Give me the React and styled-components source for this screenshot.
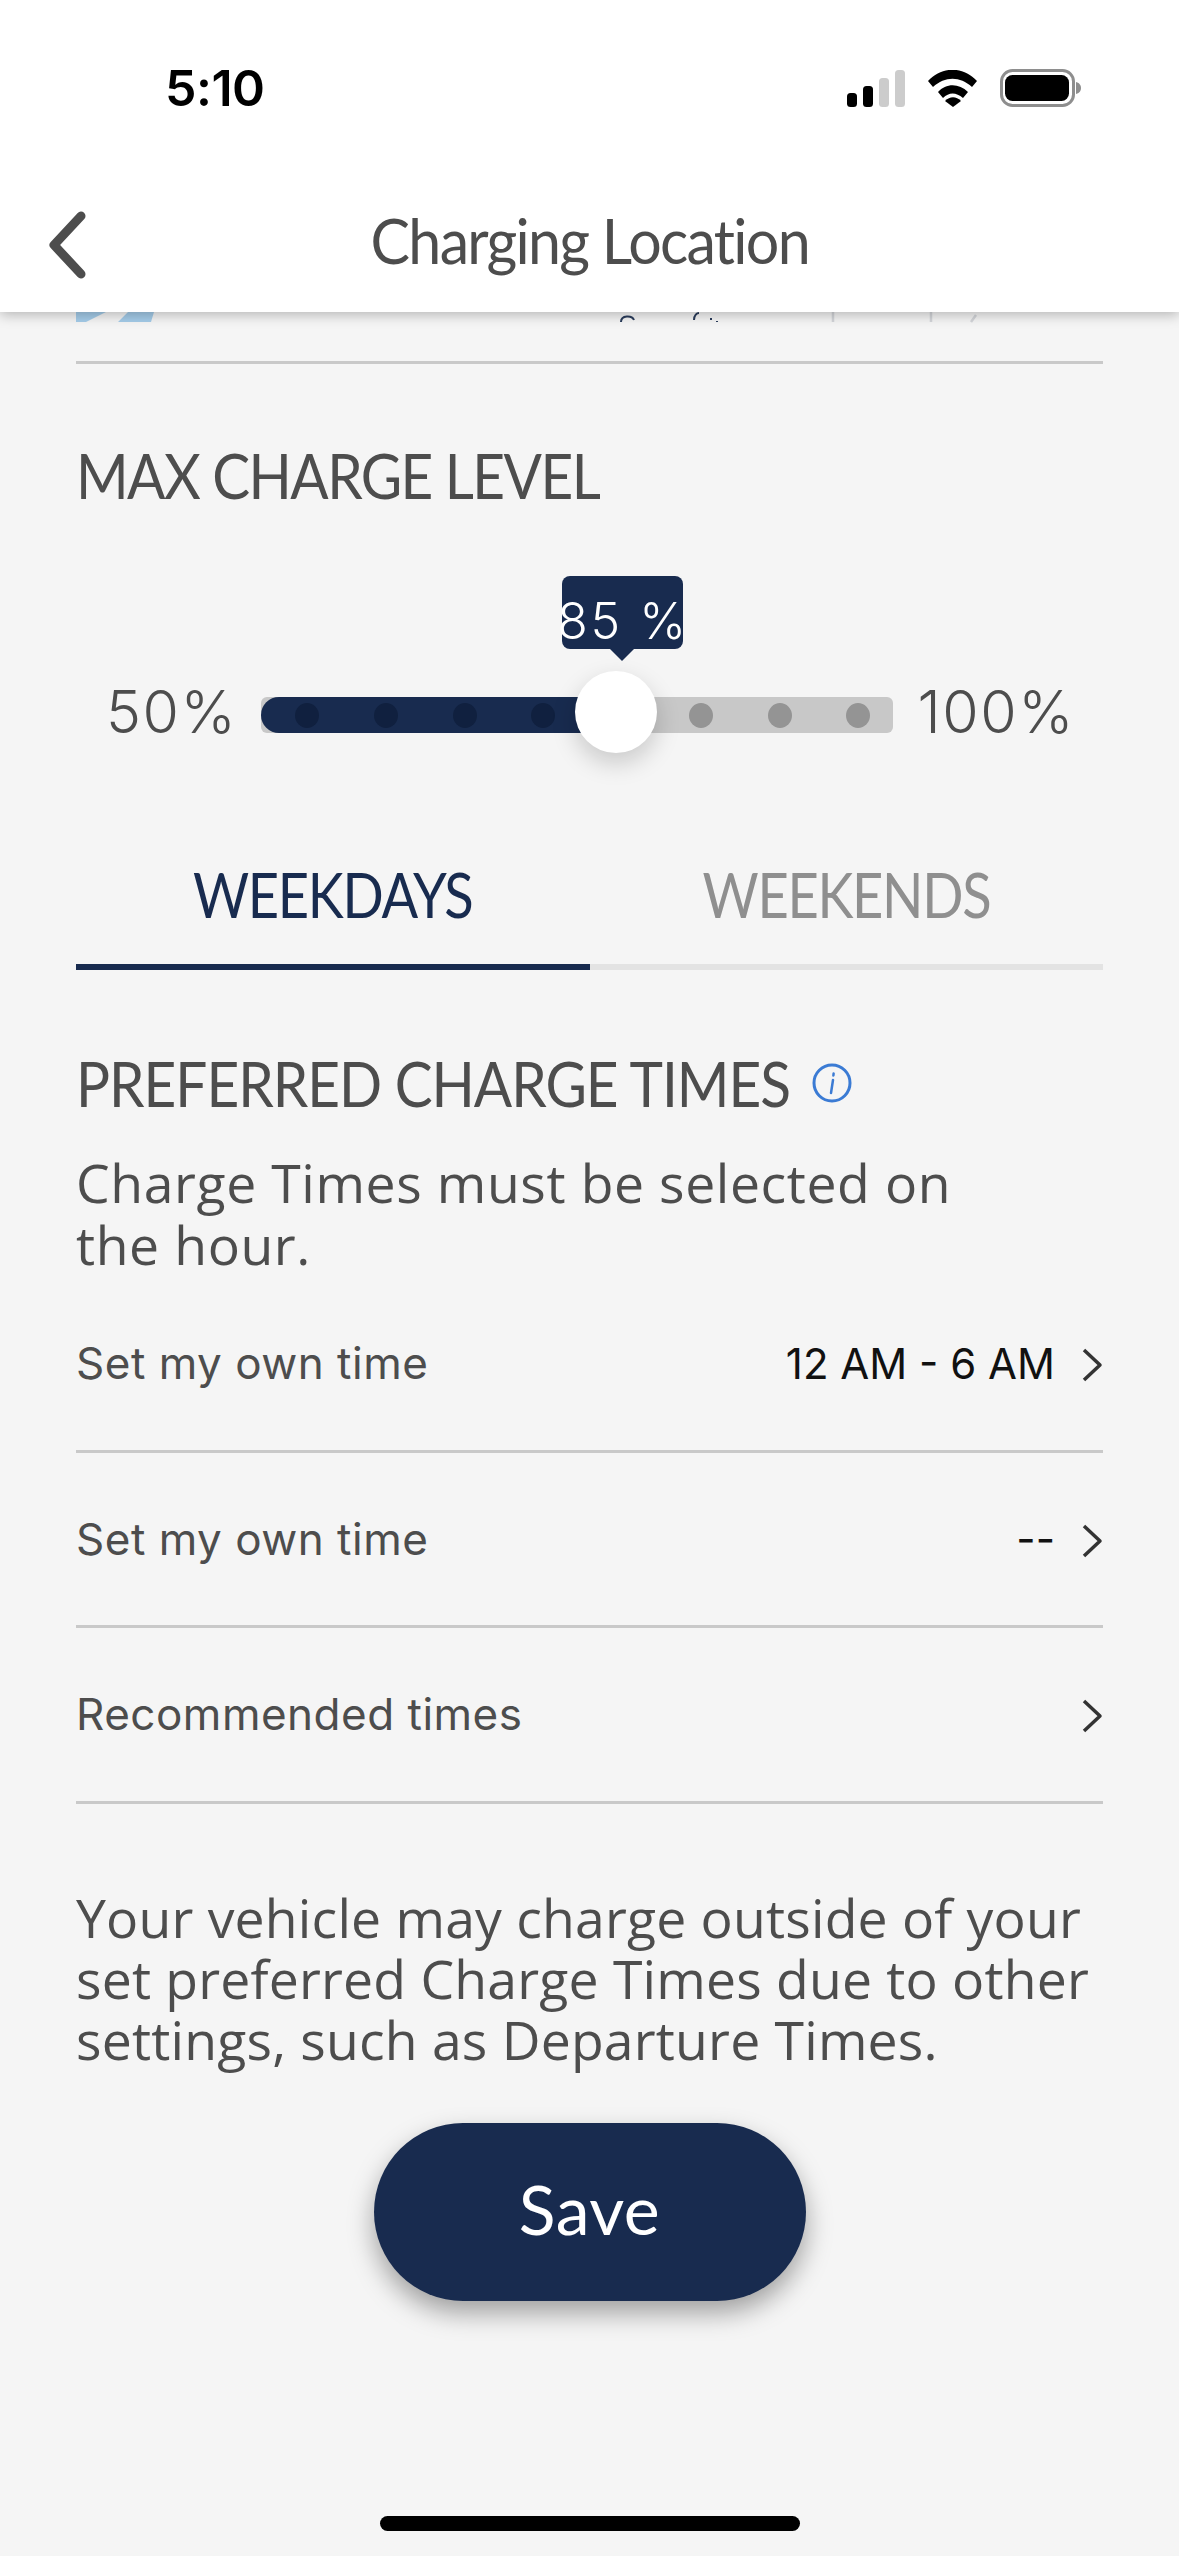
import React from "react";
import styled, { createGlobalStyle } from "styled-components";

const NAVY = "#182b4f";
const INK = "#4d4d4d";

const GlobalStyle = createGlobalStyle`
  html, body {
    margin: 0;
    padding: 0;
    background: #f5f5f5;
  }
  * {
    box-sizing: border-box;
  }
`;

const Page = styled.div`
  width: 1179px;
  height: 2556px;
  overflow: hidden;
  background: #f5f5f5;
  font-family: "Open Sans", "Liberation Sans", sans-serif;
  color: ${INK};
`;

const Header = styled.header`
  position: relative;
  z-index: 2;
  height: 312px;
  background: #fff;
  box-shadow: 0 3px 12px rgba(0, 0, 0, 0.26);
`;

const StatusBar = styled.div`
  height: 176px;
  padding: 0 98px 0 165px;
  display: flex;
  align-items: center;
  justify-content: space-between;
`;

const Clock = styled.span`
  font-family: Inter, "Liberation Sans", sans-serif;
  font-weight: 600;
  font-size: 50px;
  line-height: 60px;
  letter-spacing: -0.5px;
  color: #000;
`;

const StatusIcons = styled.div`
  display: flex;
  align-items: center;
  gap: 23px;
`;

const NavBar = styled.div`
  position: relative;
  height: 136px;
  padding-bottom: 8px;
  display: flex;
  align-items: center;
  justify-content: center;
`;

const BackButton = styled.svg`
  position: absolute;
  left: 44px;
  top: 34px;
`;

const Title = styled.h1`
  margin: 0;
  font-family: Lato, sans-serif;
  font-size: 62px;
  line-height: 80px;
  font-weight: 400;
  letter-spacing: -1.8px;
  transform: scaleX(0.954);
  color: ${INK};
`;

const Content = styled.main`
  padding: 0 76px;
`;

const MapPeek = styled.svg`
  display: block;
  margin: 0 -76px;
`;

const Rule = styled.div`
  height: 3px;
  background: #c9c9c9;
  margin-top: -1px;
`;

const Heading = styled.h2`
  margin: ${(p) => p.$top}px 0 0;
  font-family: Lato, sans-serif;
  font-size: 62px;
  line-height: 60px;
  font-weight: 400;
  letter-spacing: ${(p) => p.$ls}px;
  white-space: nowrap;
  transform: scaleX(0.915);
  transform-origin: left center;
  color: ${INK};
`;

const SliderRow = styled.div`
  margin-top: 160px;
  height: 100px;
  padding: 0 28px 0 30px;
  display: flex;
  align-items: center;
  justify-content: space-between;
`;

const RangeLabel = styled.span`
  margin-bottom: 6px;
  font-family: Inter, sans-serif;
  font-size: 59px;
  line-height: 60px;
  font-weight: 300;
  letter-spacing: 1.5px;
  color: ${INK};
`;

const Track = styled.div`
  position: relative;
  width: 632px;
  height: 36px;
  padding-left: 34px;
  display: flex;
  align-items: center;
  gap: 54.7px;
  background: #c8c8c8;
  border-radius: 6px;
`;

const Fill = styled.div`
  position: absolute;
  left: 0;
  top: 0;
  bottom: 0;
  background: ${NAVY};
  border-radius: 18px 0 0 18px;
`;

const Dot = styled.span`
  position: relative;
  width: 24px;
  height: 25px;
  flex: none;
  border-radius: 50%;
  background: ${(p) => (p.$on ? "#10203f" : "#949494")};
`;

const Thumb = styled.div`
  position: absolute;
  left: 314px;
  top: -26px;
  width: 82px;
  height: 82px;
  border-radius: 50%;
  background: #fff;
  box-shadow: 0 10px 24px rgba(0, 0, 0, 0.18);
`;

const Bubble = styled.div`
  position: absolute;
  left: 301px;
  top: -121px;
  width: 121px;
  height: 73px;
  border-radius: 8px;
  background: ${NAVY};
  display: flex;
  justify-content: center;
  color: #fff;
  font-family: Inter, sans-serif;
  font-size: 50px;
  font-weight: 300;
  letter-spacing: 2.5px;
  line-height: 90px;
  white-space: nowrap;

  &::after {
    content: "";
    position: absolute;
    left: 48px;
    bottom: -12px;
    border-left: 12px solid transparent;
    border-right: 12px solid transparent;
    border-top: 12px solid ${NAVY};
  }
`;

const Tabs = styled.div`
  margin-top: 99px;
  display: grid;
  grid-template-columns: 1fr 1fr;
`;

const Tab = styled.div`
  height: 106px;
  padding-bottom: 40px;
  text-align: center;
  border-bottom: 6px solid ${(p) => (p.$active ? NAVY : "#e3e3e3")};
`;

const TabLabel = styled.span`
  display: inline-block;
  font-family: Lato, sans-serif;
  font-size: 62px;
  line-height: 60px;
  letter-spacing: -1.5px;
  transform: scaleX(0.875);
  color: ${(p) => (p.$active ? NAVY : "#8f8f8f")};
`;

const HeadingRow = styled.div`
  display: flex;
  align-items: center;
`;

const InfoIcon = styled.svg`
  flex: none;
  margin: 83px 0 0 -44px;
`;

const Body = styled.p`
  margin: ${(p) => p.$top}px 0 0;
  font-size: 53.5px;
  letter-spacing: ${(p) => p.$ls}px;
  line-height: ${(p) => p.$lh}px;
  color: ${INK};
  white-space: pre-line;
`;

const RowList = styled.div`
  margin-top: 1px;
`;

const Row = styled.div`
  height: 175.5px;
  display: flex;
  align-items: center;
  justify-content: space-between;
  border-bottom: 3px solid #c9c9c9;
`;

const RowLabel = styled.span`
  font-family: Inter, sans-serif;
  font-size: 44px;
  letter-spacing: 0.5px;
  color: ${INK};
`;

const RowValue = styled.span`
  display: flex;
  align-items: center;
  gap: 26px;
  font-family: Inter, sans-serif;
  font-size: 42px;
  color: #111;
`;

const ChevronIcon = styled.svg`
  margin-top: 4px;
`;

const SaveButton = styled.button`
  display: block;
  width: 432px;
  height: 178px;
  margin: 53px auto 0;
  padding: 0 0 6px;
  border: 0;
  border-radius: 89px;
  background: ${NAVY};
  color: #fff;
  font-family: Lato, sans-serif;
  font-size: 68px;
  letter-spacing: 0.5px;
  box-shadow: 0 12px 26px rgba(0, 0, 0, 0.35);
`;

const HomeBar = styled.div`
  width: 420px;
  height: 15px;
  margin: 215px auto 0;
  background: #000;
  border-radius: 8px;
`;

const Chevron = () => (
  <ChevronIcon width="22" height="34" viewBox="0 0 22 34" fill="none">
    <path d="M3 2 L19 17 L3 32" stroke="#333" strokeWidth="3.5" strokeLinejoin="round" />
  </ChevronIcon>
);

const rows = [
  { label: "Set my own time", value: "12 AM - 6 AM" },
  { label: "Set my own time", value: "--" },
  { label: "Recommended times" },
];

const dots = [true, true, true, true, false, false, false, false];

export default function App() {
  return (
    <Page>
      <GlobalStyle />
      <Header>
        <StatusBar>
          <Clock>5:10</Clock>
          <StatusIcons>
            <svg width="58" height="37" viewBox="0 0 58 37">
              <rect x="0" y="23" width="10" height="14" rx="3.5" fill="#000" />
              <rect x="16" y="16" width="10" height="21" rx="3.5" fill="#000" />
              <rect x="32" y="8" width="10" height="29" rx="3.5" fill="#ccc" />
              <rect x="48" y="0" width="10" height="37" rx="3.5" fill="#ccc" />
            </svg>
            <svg width="49" height="37" viewBox="0 0 49 37">
              <path d="M0 11 C14 -4 35 -4 49 11 L44 17 C32 6 17 6 5 17 Z" fill="#000" />
              <path d="M10 22 C18 13 31 13 40 22 L35 28 C28 22 21 22 15 28 Z" fill="#000" />
              <path d="M17 31 C22 26 28 26 33 31 L25 37 Z" fill="#000" />
            </svg>
            <svg width="81" height="38" viewBox="0 0 81 38">
              <rect x="1.5" y="1.5" width="72" height="35" rx="11" fill="none" stroke="#8e8e8e" strokeWidth="3" />
              <rect x="5" y="6" width="64" height="26" rx="7.5" fill="#000" />
              <path d="M76 13 C80 14 81 17 81 19 C81 21 80 24 76 25 Z" fill="#8e8e8e" />
            </svg>
          </StatusIcons>
        </StatusBar>
        <NavBar>
          <BackButton width="42" height="70" viewBox="0 0 42 70" fill="none">
            <path d="M37 6 L10 35 L37 64" stroke={INK} strokeWidth="9" strokeLinecap="round" strokeLinejoin="round" />
          </BackButton>
          <Title>Charging Location</Title>
        </NavBar>
      </Header>

      <Content>
        <MapPeek width="1179" height="50" viewBox="0 0 1179 50" fill="none">
          <path d="M76 0 H106 L86 10 H76 Z M128 0 H154 L151 10 H118 Z" fill="#a5cdea" />
          <path d="M621 10 C621 3 632 3 634 8 M694 8 C694 3 697 1 699 1 M711 6 V8 M717 9 V10" stroke="#2b3d5c" strokeWidth="2" />
          <path d="M833 0 V10 M931 0 V10 M976 3 L971 10" stroke="#d4d6da" strokeWidth="2.5" />
        </MapPeek>
        <Rule />

        <Heading $top={81} $ls={-1.7}>MAX CHARGE LEVEL</Heading>

        <SliderRow>
          <RangeLabel>50%</RangeLabel>
          <Track>
            <Fill style={{ width: `${(85 - 50) / 50 * 100 * 0.56 + 16}%` }} />
            {dots.map((on, i) => (
              <Dot key={i} $on={on} />
            ))}
            <Thumb />
            <Bubble>85 %</Bubble>
          </Track>
          <RangeLabel>100%</RangeLabel>
        </SliderRow>

        <Tabs>
          <Tab $active><TabLabel $active>WEEKDAYS</TabLabel></Tab>
          <Tab><TabLabel>WEEKENDS</TabLabel></Tab>
        </Tabs>

        <HeadingRow>
          <Heading $top={83} $ls={-1.1}>PREFERRED CHARGE TIMES</Heading>
          <InfoIcon width="40" height="40" viewBox="0 0 40 40" fill="none">
            <circle cx="20" cy="20" r="18" stroke="#3b7bd4" strokeWidth="3" />
            <path d="M21 17 L19 30 M21.6 10.5 L21.4 12.5" stroke="#3b7bd4" strokeWidth="2.5" strokeLinecap="round" />
          </InfoIcon>
        </HeadingRow>

        <Body $top={39} $lh={62} $ls={0.6}>{"Charge Times must be selected on\nthe hour."}</Body>

        <RowList>
          {rows.map((row, i) => (
            <Row key={i}>
              <RowLabel>{row.label}</RowLabel>
              <RowValue>
                {row.value}
                <Chevron />
              </RowValue>
            </Row>
          ))}
        </RowList>

        <Body $top={83} $lh={61} $ls={0.2}>
          {"Your vehicle may charge outside of your\nset preferred Charge Times due to other\nsettings, such as Departure Times."}
        </Body>

        <SaveButton>Save</SaveButton>
        <HomeBar />
      </Content>
    </Page>
  );
}
